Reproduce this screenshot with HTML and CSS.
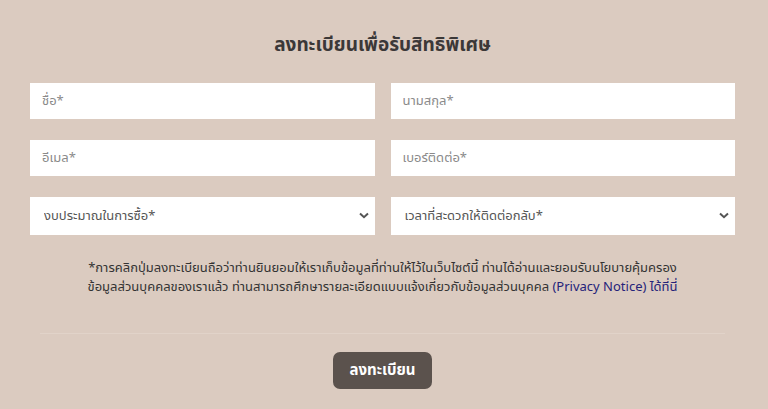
FILE: index.html
```html
<!DOCTYPE html>
<html>
<head>
  <meta charset="utf-8">
  <title>ลงทะเบียนเพื่อรับสิทธิพิเศษ</title>
  <link rel="stylesheet" href="styles.css">
</head>
<body>
<div class="register">
  <h2 class="register-title">ลงทะเบียนเพื่อรับสิทธิพิเศษ</h2>
  <form class="register-form">
    <div class="form-grid">
      <input type="text" class="field" placeholder="ชื่อ*">
      <input type="text" class="field" placeholder="นามสกุล*">
      <input type="text" class="field" placeholder="อีเมล*">
      <input type="text" class="field" placeholder="เบอร์ติดต่อ*">
      <div class="select-wrap">
        <select class="field select">
          <option>งบประมาณในการซื้อ*</option>
        </select>
        <svg class="arrow" width="10" height="7" viewBox="0 0 10 7"><path d="M1 1.5 L5 5.2 L9 1.5" fill="none" stroke="#555" stroke-width="2"/></svg>
      </div>
      <div class="select-wrap">
        <select class="field select">
          <option>เวลาที่สะดวกให้ติดต่อกลับ*</option>
        </select>
        <svg class="arrow" width="10" height="7" viewBox="0 0 10 7"><path d="M1 1.5 L5 5.2 L9 1.5" fill="none" stroke="#555" stroke-width="2"/></svg>
      </div>
    </div>
    <p class="note">
      *การคลิกปุ่มลงทะเบียนถือว่าท่านยินยอมให้เราเก็บข้อมูลที่ท่านให้ไว้ในเว็บไซต์นี้ ท่านได้อ่านและยอมรับนโยบายคุ้มครอง<br>
      ข้อมูลส่วนบุคคลของเราแล้ว ท่านสามารถศึกษารายละเอียดแบบแจ้งเกี่ยวกับข้อมูลส่วนบุคคล <a href="#" class="note-link">(Privacy Notice) ได้ที่นี่</a>
    </p>
    <hr class="divider">
    <div class="actions">
      <button type="button" class="submit">ลงทะเบียน</button>
    </div>
  </form>
</div>
</body>
</html>
```
FILE: styles.css
```css
body {
  margin: 0;
  background-color: #dbcbc0;
  font-family: "Noto Sans Thai", "Noto Sans", "DejaVu Sans", sans-serif;
  color: #333;
}
.register {
  padding: 30px 33px 0 30px;
}
.register-title {
  margin: 0 0 21px;
  text-align: center;
  font-size: 19px;
  font-weight: bold;
  color: #3b3838;
  line-height: 32px;
}
.form-grid {
  display: grid;
  grid-template-columns: 1fr 1fr;
  column-gap: 16px;
  row-gap: 21px;
}
.field {
  box-sizing: border-box;
  width: 100%;
  height: 36px;
  padding: 0 12px;
  border: none;
  background: #fff;
  font-family: inherit;
  font-size: 13px;
  color: #555;
  outline: none;
}
.field::placeholder {
  color: #8a8a8a;
}
.select-wrap {
  position: relative;
}
.select {
  height: 38px;
  padding-left: 14px;
  appearance: none;
  -webkit-appearance: none;
  border-radius: 0;
  color: #555;
}
.arrow {
  position: absolute;
  right: 6px;
  top: 15px;
  pointer-events: none;
}
.note {
  margin: 24px 0 0;
  text-align: center;
  font-size: 13px;
  line-height: 19px;
  color: #333;
}
.note-link {
  color: #25237a;
  text-decoration: none;
}
.divider {
  margin: 36px 10px 0;
  border: none;
  border-top: 1px solid #e1d3c9;
}
.actions {
  text-align: center;
  padding-top: 18px;
}
.submit {
  background-color: #5b524d;
  color: #fff;
  border: none;
  border-radius: 7px;
  width: 99px;
  height: 37px;
  font-family: inherit;
  font-size: 15px;
  font-weight: bold;
  cursor: pointer;
}
```
